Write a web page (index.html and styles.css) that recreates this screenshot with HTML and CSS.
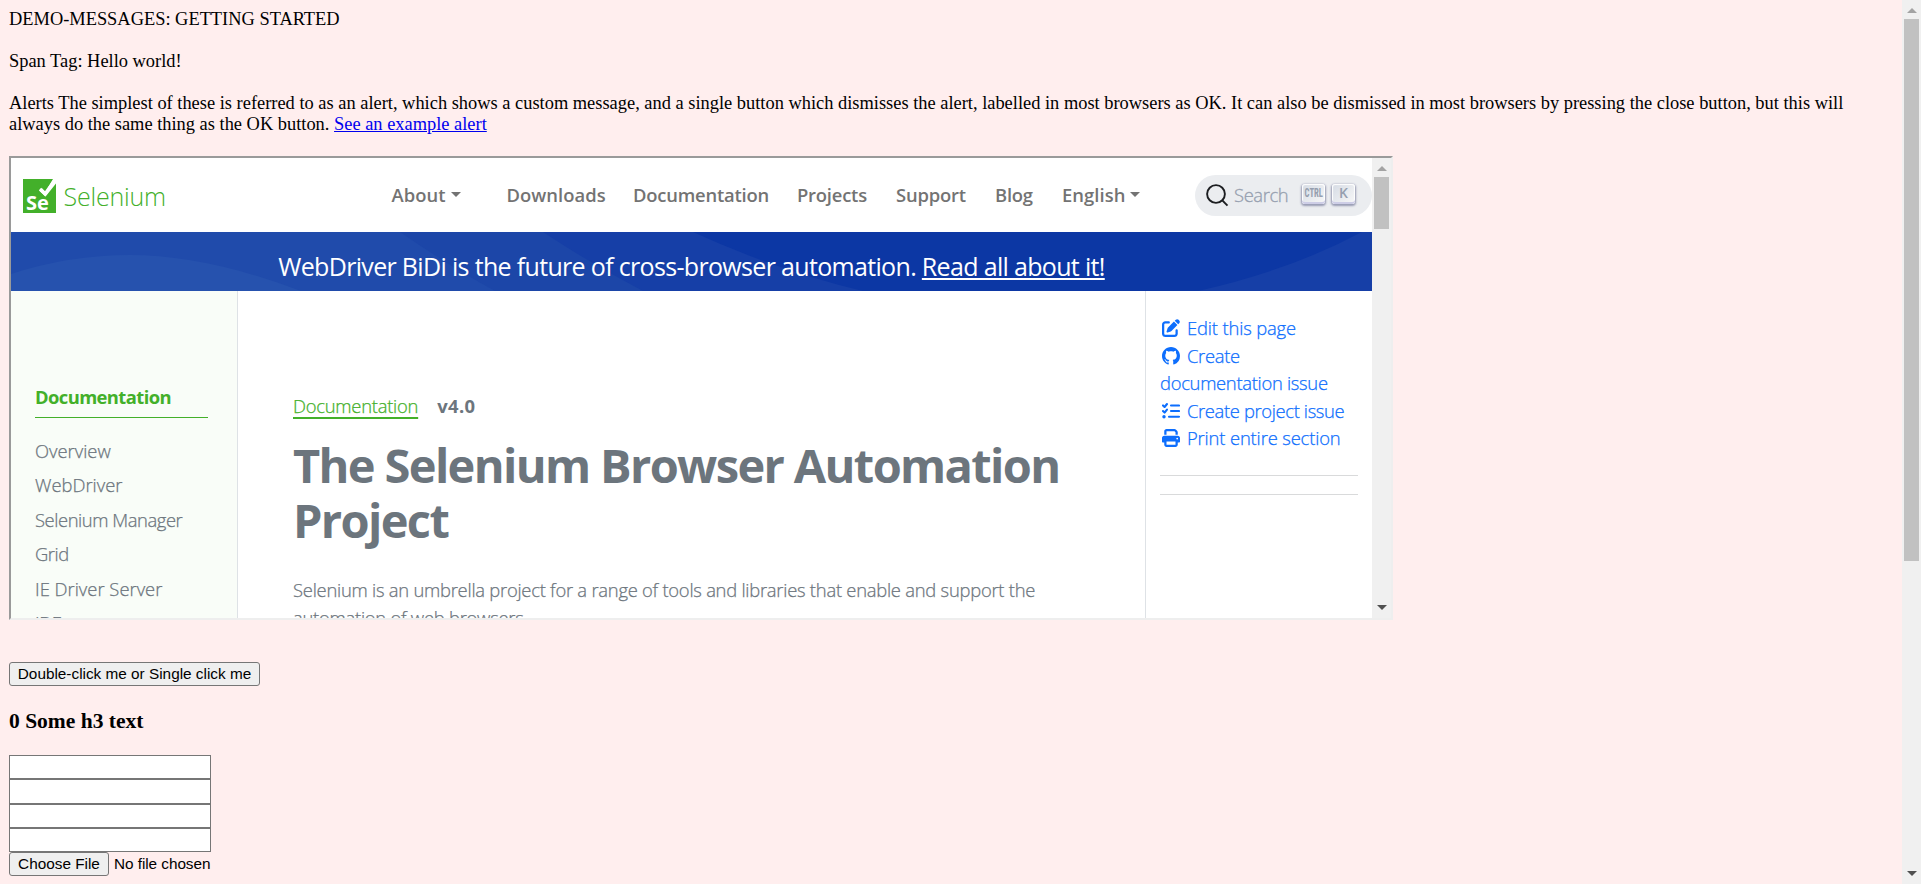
FILE: index.html
```
<!DOCTYPE html>
<html lang="en">
<head>
<meta charset="utf-8">
<title>Demo messages</title>
<link rel="stylesheet" href="styles.css">
</head>
<body>
<main class="page">
  <p class="line">DEMO-MESSAGES: GETTING STARTED</p>
  <p class="line">Span Tag: Hello world!</p>
  <p class="line">Alerts The simplest of these is referred to as an alert, which shows a custom message, and a single button which dismisses the alert, labelled in most browsers as OK. It can also be dismissed in most browsers by pressing the close button, but this will<br>always do the same thing as the OK button. <a class="alert-link" href="#">See an example alert</a></p>

  <section class="frame">
    <div class="site">
      <header class="header">
        <div class="brand">
          <svg class="brand-mark" viewBox="0 0 33 34"><path fill="#43b02a" d="M0 0H30L22.500 12.800L19 9.200L16.300 11.700L22.600 17.400L33 4.600V34H0Z"/><path fill="none" stroke="#fff" stroke-width="3.200" d="M17 10L22 15L32 1"/><text x="3" y="30.500" class="brand-se">Se</text></svg>
          <span class="brand-name">Selenium</span>
        </div>
        <nav class="nav">
          <span class="wide">About<i class="caret"></i></span>
          <span class="wide">Downloads</span>
          <span>Documentation</span>
          <span>Projects</span>
          <span>Support</span>
          <span>Blog</span>
          <span class="wide">English<i class="caret"></i></span>
        </nav>
        <div class="search">
          <svg class="search-icon" viewBox="0 0 23 23"><g fill="none" stroke="#1c1e21" stroke-width="1.900"><circle cx="10" cy="10" r="8.900"/><path d="M16.300 16.300L21.500 21.700"/></g></svg>
          <span class="search-text">Search</span>
          <span class="key"><b class="ctrl">CTRL</b></span>
          <span class="key"><b>K</b></span>
        </div>
      </header>
      <div class="banner">
        <svg class="waves" viewBox="0 0 1361 59" preserveAspectRatio="none">
          <path fill="#163fa7" d="M0 0H682Q765 38 852 59H0Z"/>
          <path fill="#1c46a8" d="M0 0H532Q582 33 632 59H0Z"/>
          <path fill="#204bab" d="M0 0H389Q438 34 484 59H0Z"/>
          <path fill="#2652ae" d="M0 42Q58 23 119 23Q195 23 290 59H0Z"/>
          <path fill="#163fa7" d="M1351 0Q1280 38 1187 59H1361V0Z"/>
        </svg>
        <span class="banner-text">WebDriver BiDi is the future of cross-browser automation. <u>Read all about it!</u></span>
      </div>
      <div class="columns">
        <aside class="sidebar">
          <div class="sidebar-title">Documentation</div>
          <ul class="menu">
            <li class="wide">Overview</li>
            <li class="wide">WebDriver</li>
            <li>Selenium Manager</li>
            <li>Grid</li>
            <li class="wide">IE Driver Server</li>
            <li>IDE</li>
          </ul>
        </aside>
        <article class="article">
          <div class="crumbs"><a class="crumb">Documentation</a><b>v4.0</b></div>
          <h1>The Selenium Browser Automation<br>Project</h1>
          <p class="intro">Selenium is an umbrella project for a range of tools and libraries that enable and support the<br>automation of web browsers.</p>
        </article>
        <aside class="tools">
          <div><svg class="icon" viewBox="0 0 512 512"><path d="M471.600 21.700c-21.900-21.900-57.300-21.900-79.200 0L362.300 51.700l97.900 97.900 30.100-30.100c21.900-21.900 21.900-57.300 0-79.200L471.600 21.700zm-299.200 220c-6.100 6.100-10.800 13.600-13.500 21.900l-29.600 88.800c-2.900 8.600-.6 18.100 5.800 24.600s15.900 8.700 24.600 5.800l88.800-29.600c8.200-2.700 15.700-7.400 21.900-13.500L437.700 172.300 339.700 74.300 172.400 241.700zM96 64C43 64 0 107 0 160V416c0 53 43 96 96 96H352c53 0 96-43 96-96V320c0-17.700-14.300-32-32-32s-32 14.300-32 32v96c0 17.700-14.300 32-32 32H96c-17.700 0-32-14.300-32-32V160c0-17.700 14.300-32 32-32h96c17.700 0 32-14.300 32-32s-14.300-32-32-32H96z"/></svg><span class="edit">Edit this page</span></div>
          <div><svg class="icon" viewBox="0 0 16 16"><path d="M8 0C3.580 0 0 3.580 0 8c0 3.540 2.290 6.530 5.470 7.590.4.070.55-.17.55-.38 0-.19-.01-.82-.01-1.490-2.010.37-2.530-.49-2.690-.94-.09-.23-.48-.94-.82-1.130-.28-.15-.68-.52-.01-.53.63-.01 1.080.58 1.230.82.72 1.210 1.870.87 2.330.66.070-.52.28-.87.51-1.070-1.780-.2-3.640-.89-3.640-3.950 0-.87.31-1.590.82-2.150-.08-.2-.36-1.020.08-2.120 0 0 .67-.21 2.200.82.64-.18 1.320-.27 2-.27s1.360.09 2 .27c1.530-1.040 2.200-.82 2.200-.82.44 1.100.16 1.920.08 2.120.51.56.82 1.270.82 2.150 0 3.070-1.870 3.750-3.650 3.950.29.25.54.73.54 1.480 0 1.070-.01 1.930-.01 2.200 0 .21.15.46.55.38A8.010 8.010 0 0 0 16 8c0-4.420-3.580-8-8-8z"/></svg><span>Create</span><br><span>documentation issue</span></div>
          <div><svg class="icon" viewBox="0 0 18 18"><path fill="none" stroke="#0d6efd" stroke-width="2.100" stroke-linecap="round" stroke-linejoin="round" d="M1 3.400L2.600 5L5 2M1 9L2.600 10.600L5 7.600M9 3.500H17M9 9H17M7 14.700H17"/><circle cx="2" cy="14.700" r="1.700"/></svg><span class="tight">Create project issue</span></div>
          <div><svg class="icon" viewBox="0 0 512 512"><path d="M128 0C92.700 0 64 28.700 64 64v96h64V64H354.700L384 93.300V160h64V93.300c0-17-6.700-33.300-18.700-45.300L400 18.700C388 6.700 371.700 0 354.700 0H128zM384 352v32 64H128V384 368 352H384zm64 32h32c17.700 0 32-14.300 32-32V256c0-35.300-28.700-64-64-64H64c-35.300 0-64 28.700-64 64v96c0 17.700 14.300 32 32 32H64v64c0 35.300 28.700 64 64 64H384c35.300 0 64-28.700 64-64V384zM432 248a24 24 0 1 1 0 48 24 24 0 1 1 0-48z"/></svg><span class="edit">Print entire section</span></div>
          <div class="rule"></div>
          <div class="rule"></div>
        </aside>
      </div>
    </div>
    <div class="scrollbar">
      <i class="arrow up"></i><i class="thumb frame-thumb"></i><i class="arrow down"></i>
    </div>
  </section>

  <button class="btn click">Double-click me or Single click me</button>
  <h3>0 Some h3 text</h3>
  <div class="fields">
    <input class="field" type="text"><input class="field" type="text"><input class="field" type="text"><input class="field" type="text">
    <div class="file"><button class="btn choose">Choose File</button><span>No file chosen</span></div>
  </div>
</main>
<div class="scrollbar window-bar">
  <i class="arrow up"></i><i class="thumb window-thumb"></i><i class="arrow down"></i>
</div>
</body>
</html>
```
FILE: styles.css
```
* { box-sizing: border-box; }
body {
  margin: 0;
  height: 884px;
  display: flex;
  overflow: hidden;
  background: #ffeeee;
  color: #000;
  font: 18.4px/21px "Liberation Serif", "Times New Roman", serif;
}
.page { flex: 1; padding: 9px 0 0 9px; min-width: 0; }
.line { margin: 0 0 21px; white-space: nowrap; letter-spacing: 0.004px; }
.alert-link { color: #0000ee; }

/* Embedded site */
.frame {
  display: flex;
  width: 1384px;
  height: 464px;
  border: 2px solid;
  border-color: #9a9a9a #eeeeee #eeeeee #9a9a9a;
  background: #fff;
  overflow: hidden;
}
.site {
  width: 1361px;
  font: 300 18.4px/27.6px "Open Sans", "Noto Sans", sans-serif;
  color: #6c757d;
  letter-spacing: -0.3px;
}
.header { display: flex; height: 74px; align-items: center; }
.brand { display: flex; width: 380.5px; padding-left: 12px; align-items: center; }
.brand-mark { width: 33px; height: 34px; margin-top: 2px; }
.brand-se { font: 700 20px "Open Sans", sans-serif; fill: #fff; letter-spacing: 0; }
.brand-name { margin-left: 7.5px; color: #43b02a; font-size: 25px; letter-spacing: -0.2px; line-height: 36px; padding-top: 2px; }
.nav {
  display: grid;
  grid-template-columns: 115px 126.5px 164px 99px 99px 67px 133px;
  font-weight: 600;
  color: #737373;
  letter-spacing: -0.2px;
}
.nav .wide { letter-spacing: 0.05px; }
.caret {
  display: inline-block;
  margin-left: 5px;
  vertical-align: 5px;
  border: 5px solid transparent;
  border-top-color: #737373;
  border-bottom: 0;
}
.search {
  display: flex;
  align-items: center;
  width: 177px;
  height: 41px;
  padding-left: 11px;
  border-radius: 21px;
  background: #ebedf0;
}
.search-icon { width: 23px; height: 23px; }
.search-text { width: 68px; margin-left: 5px; color: #969faf; letter-spacing: -0.4px; -webkit-text-stroke: 0.3px; }
.key {
  display: flex;
  justify-content: center;
  align-items: center;
  width: 23px;
  height: 20px;
  margin: 0 7px 2px 0;
  border-radius: 3px;
  background: linear-gradient(-225deg, #d5dbe4, #f8f8f8);
  box-shadow: inset 0 -2px 0 #cdcde6, inset 0 0 1px 1px #fff, 0 1px 2px 1px rgba(30, 35, 90, .4);
  color: #969faf;
}
.key b { font: 600 14px/16px "Open Sans", sans-serif; letter-spacing: 0; padding-bottom: 2px; }
.key .ctrl { font: 700 12px/16px Roboto, sans-serif; font-stretch: 75%; transform: scaleX(.72); }
.banner { position: relative; height: 59px; padding-top: 15px; background: #0c37a4; text-align: center; }
.waves { position: absolute; inset: 0; width: 100%; height: 59px; }
.banner-text {
  position: relative;
  display: block;
  color: #fff;
  font-size: 25px;
  font-weight: 400;
  line-height: 39px;
  letter-spacing: -0.67px;
  white-space: nowrap;
}
.banner-text u { text-decoration-thickness: 2px; text-underline-offset: 2px; text-decoration-skip-ink: none; }
.columns { display: grid; grid-template-columns: 227px 907px 227px; height: 420px; }
.sidebar { padding: 91.5px 29.5px 0 24px; background: #f9fdf8; border-right: 1px solid #dee2e6; }
.sidebar-title {
  height: 35.5px;
  border-bottom: 1px solid #43b02a;
  color: #43b02a;
  font-weight: 700;
  letter-spacing: -0.6px;
}
.menu { margin: 18.8px 0 0; padding: 0; list-style: none; letter-spacing: -0.44px; }
.menu .wide { letter-spacing: 0; }
.menu li { margin-bottom: 6.9px; }
.menu, .crumb, .intro, .tools { -webkit-text-stroke: 0.25px; }
.article { padding: 101px 0 0 55px; white-space: nowrap; }
.crumbs { display: flex; gap: 19px; letter-spacing: -0.25px; }
.crumb { color: #43b02a; text-decoration: underline 2px; text-underline-offset: 4px; text-decoration-skip-ink: none; }
.crumbs b { font-weight: 700; letter-spacing: 0.4px; }
h1 { margin: 18px 0 28px; font-size: 47px; line-height: 55.2px; letter-spacing: -1.64px; font-weight: 700; }
.intro { margin: 0; letter-spacing: -0.25px; }
.tools { padding: 23px 14px 0 14px; border-left: 1px solid #dee2e6; color: #0d6efd; white-space: nowrap; }
.icon { width: 18px; height: 18px; margin: 0 7px 0 2px; vertical-align: -2px; fill: #0d6efd; }
.edit { letter-spacing: -0.15px; }
.tight { letter-spacing: -0.36px; }
.rule { height: 1px; margin-top: 23px; background: #d9dadb; }
.rule + .rule { margin-top: 18px; }

/* Scrollbars */
.scrollbar { display: flex; flex-direction: column; align-items: center; width: 19px; background: #f0f0f0; }
.arrow { border: 5px solid transparent; }
.arrow.up { margin-top: 8px; border-top: 0; border-bottom-color: #a3a3a3; }
.arrow.down { margin: auto 0 8px; border-bottom: 0; border-top-color: #505050; }
.thumb { width: 15px; margin-top: 6px; background: #c1c1c1; }
.frame-thumb { height: 52px; }
.window-thumb { height: 542px; }

/* Form controls */
.btn {
  display: block;
  height: 24px;
  padding: 0;
  border: 1px solid #767676;
  border-radius: 3px;
  background: #efefef;
  color: #000;
  font: 15.33px/20px "Liberation Sans", Arial, sans-serif;
}
.click { width: 251px; margin-top: 42px; }
h3 { margin: 21.5px 0; font-size: 21.53px; line-height: 26px; }
.fields { display: flex; flex-direction: column; align-items: flex-start; }
.field { width: 202px; height: 24.3px; padding: 0; border: 1px solid #767676; border-radius: 0; background: #fff; }
.file { display: flex; gap: 5px; align-items: center; font: 15.33px/24px "Liberation Sans", Arial, sans-serif; letter-spacing: -0.05px; }
.choose { width: 100px; }
```
